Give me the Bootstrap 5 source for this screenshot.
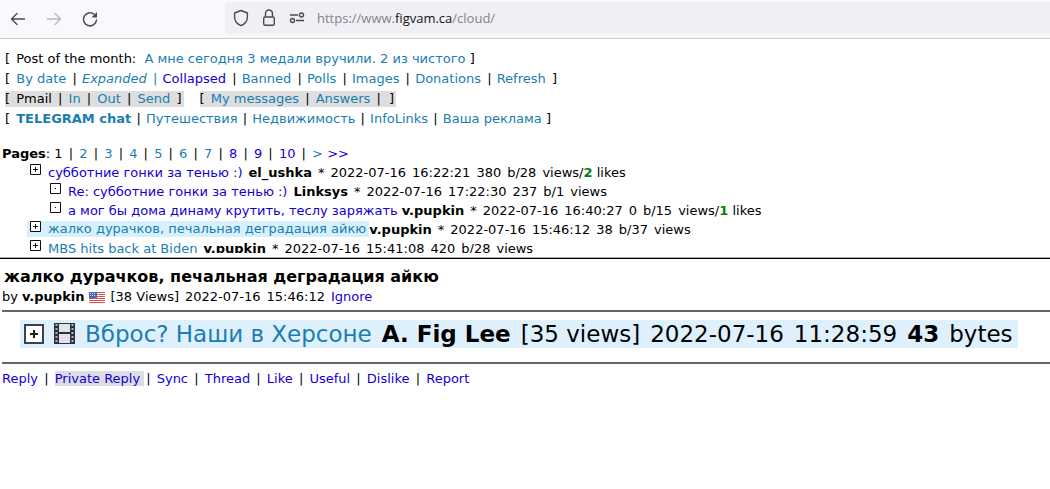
<!DOCTYPE html>
<html lang="ru">
<head>
<meta charset="utf-8">
<meta name="viewport" content="width=device-width, initial-scale=1">
<title>figvam.ca</title>
<link rel="stylesheet" href="https://cdn.jsdelivr.net/npm/bootstrap@5.3.0/dist/css/bootstrap.min.css">
<script src="https://cdn.jsdelivr.net/npm/bootstrap@5.3.0/dist/js/bootstrap.bundle.min.js" defer></script>
<style>
body{font:13px/20px "DejaVu Sans",Verdana,sans-serif;color:#000;background:#fff}
a{color:#1a7db3;text-decoration:none}
a.fresh{color:#1400d2}
b{font-weight:700}
.chrome{height:39px;background:#f9f9fd;border-bottom:1px solid #ccccd2;padding-left:10px}
.chrome button{border:0;background:none;padding:0;color:#4b4a55}
.chrome svg,.tree svg,.banner svg{display:block;flex:none}
.nav-set{gap:20px;width:215px;height:38px}
.address{height:32px;margin-top:2px;background:#f0eff4;border-radius:4px 0 0 4px;padding-left:8px;color:#4b4a55}
.url{font:13px/20px "Open Sans",sans-serif;color:#85848c}
.url span{color:#15141a}
.menus{padding:10px 5px 0}
.menus>div{height:20px}
.sep{margin:0 1px 0 2px}
.wide .sep{margin:0 2px}
.tight .sep{margin:0 1px}
.open{margin-right:2px}
.shade{background:#dedede;line-height:16px}
.threads{height:109px;margin-top:15px;overflow:hidden;line-height:19px;white-space:nowrap}
.pages{padding-left:2px}
.post{display:flex;height:19px;padding-left:27px}
.post.reply{padding-left:47px}
.tree{padding:1px 7px 0 3px}
.post p{display:flex;gap:6px;margin:0;padding-left:6px}
.hit{display:flex}
.picked .hit{background:#d6f0fc;height:16px;line-height:16px;margin-top:1px;padding-right:3px}
.picked .tree{padding-top:0}
.post.picked p{padding-left:0}
.likes{color:#0a7d0a}
.split{height:2px;background:#000;border-top:1px solid #aaa;margin-top:4px}
h1{font-size:16px;line-height:20px;font-weight:700;margin:8px 0 0;padding-left:4px}
.meta{display:flex;align-items:center;gap:6px;padding-left:2px}
.author{display:flex;align-items:center;gap:4px}
.rule{border-top:2px solid #666;margin-left:2px}
.body-text{margin-top:3px}
.banner{font-size:23px;line-height:28px;background:#dff0fd;margin:8px 32px 14px 20px;padding:0 0 0 4px;gap:10px;white-space:nowrap}
.actions{padding-left:2px;margin-top:5px}
.private{background:#dcdce2;padding-right:4px}
</style>
</head>
<body>
<header class="chrome d-flex">
  <div class="nav-set d-flex align-items-center">
    <button type="button" aria-label="Back"><svg width="16" height="16" viewBox="0 0 16 16" fill="none" stroke="currentColor" stroke-width="1.4" stroke-linecap="round" stroke-linejoin="round"><path d="M14.500 8H1.700M7 2.500 1.500 8 7 13.500"/></svg></button>
    <button type="button" aria-label="Forward"><svg width="16" height="16" viewBox="0 0 16 16" fill="none" stroke="#b9b8c0" stroke-width="1.4" stroke-linecap="round" stroke-linejoin="round"><path d="M1.500 8h12.800M9 2.500 14.500 8 9 13.500"/></svg></button>
    <button type="button" aria-label="Reload"><svg width="16" height="16" viewBox="0 0 16 16" fill="none" stroke="currentColor" stroke-width="1.5" stroke-linecap="round"><path d="M14.500 9A6.500 6.500 0 1 1 12 3.200"/><path d="M15 1v5.500H9.500z" fill="currentColor" stroke="none"/></svg></button>
  </div>
  <div class="address flex-grow-1 d-flex align-items-center">
    <svg width="16" height="18" viewBox="0 0 16 18" fill="none" stroke="currentColor" stroke-width="1.4" stroke-linejoin="round"><path d="M8 1.500 14.400 4v4c0 4-2.500 7-6.400 8.700C4.100 15 1.600 12 1.600 8V4z"/></svg>
    <svg class="ms-2" width="24" height="18" viewBox="0 0 24 18" fill="none" stroke="currentColor" stroke-width="1.4"><rect x="6.700" y="8" width="10.600" height="8.300" rx="1.500"/><path d="M8.500 8V4.500a3.500 3.500 0 0 1 7 0V8"/></svg>
    <svg class="ms-2" width="16" height="18" viewBox="0 0 16 18" fill="none" stroke="currentColor" stroke-width="1.4"><path d="M1 6h8M7 11.500h8"/><circle cx="12.500" cy="6" r="2"/><circle cx="3.500" cy="11.500" r="2"/></svg>
    <div class="url ms-2 ps-1">https://www.<span>figvam.ca</span>/cloud/</div>
  </div>
</header>

<svg class="d-none" aria-hidden="true">
  <symbol id="closed" viewBox="0 0 11 11"><path d="M.5.5h10v10H.5zM3 5.500h5M5.500 3v5" fill="#fff" stroke="#111"/></symbol>
  <symbol id="leaf" viewBox="0 0 11 11"><path d="M.5.5h10v10H.5z" fill="#fff" stroke="#111"/><path d="M5 5h1v1H5z"/></symbol>
</svg>

<main>
  <nav class="menus text-nowrap">
    <div><span class="open">[</span> Post of the month: <a href="#" class="ms-1">А мне сегодня 3 медали вручили. 2 из чистого</a> ]</div>
    <div><span class="open">[</span> <a href="#">By date</a> <span class="sep">|</span> <a href="#"><i>Expanded</i> <span class="sep">|</span></a> <a href="#" class="fresh">Collapsed</a> <span class="sep">|</span> <a href="#">Banned</a> <span class="sep">|</span> <a href="#">Polls</a> <span class="sep">|</span> <a href="#">Images</a> <span class="sep">|</span> <a href="#">Donations</a> <span class="sep">|</span> <a href="#">Refresh</a> <span class="sep">]</span></div>
    <div class="wide d-flex align-items-center gap-3"><div class="shade"><span class="open">[</span> Pmail <span class="sep">|</span> <a href="#">In</a> <span class="sep">|</span> <a href="#">Out</a> <span class="sep">|</span> <a href="#">Send</a> <span class="sep">]</span></div><div class="shade"><span class="open">[</span> <a href="#">My messages</a> <span class="sep">|</span> <a href="#">Answers</a> <span class="sep">|</span> <span class="sep">]</span></div></div>
    <div class="tight"><span class="open">[</span> <a href="#"><b>TELEGRAM chat</b></a> <span class="sep">|</span> <a href="#">Путешествия</a> <span class="sep">|</span> <a href="#">Недвижимость</a> <span class="sep">|</span> <a href="#">InfoLinks</a> <span class="sep">|</span> <a href="#">Ваша реклама</a> ]</div>
  </nav>

  <section class="threads">
    <nav class="pages wide"><b>Pages</b>: 1 <span class="sep">|</span> <a href="#">2</a> <span class="sep">|</span> <a href="#">3</a> <span class="sep">|</span> <a href="#">4</a> <span class="sep">|</span> <a href="#">5</a> <span class="sep">|</span> <a href="#">6</a> <span class="sep">|</span> <a href="#">7</a> <span class="sep">|</span> <a href="#" class="fresh">8</a> <span class="sep">|</span> <a href="#" class="fresh">9</a> <span class="sep">|</span> <a href="#" class="fresh">10</a> <span class="sep">|</span> <a href="#">&gt;</a> <a href="#" class="fresh">&gt;&gt;</a></nav>
    <div class="post">
      <div class="hit"><span class="tree"><svg width="11" height="11"><use href="#closed"/></svg></span><a href="#" class="fresh">субботние гонки за тенью :)</a></div>
      <p><b>el_ushka</b><span>*</span><span>2022-07-16</span><span>16:22:21</span><span>380</span><span>b/28</span><span>views/<b class="likes">2</b> likes</span></p>
    </div>
    <div class="post reply">
      <div class="hit"><span class="tree"><svg width="11" height="11"><use href="#leaf"/></svg></span><a href="#" class="fresh">Re: субботние гонки за тенью :)</a></div>
      <p><b>Linksys</b><span>*</span><span>2022-07-16</span><span>17:22:30</span><span>237</span><span>b/1</span><span>views</span></p>
    </div>
    <div class="post reply">
      <div class="hit"><span class="tree"><svg width="11" height="11"><use href="#leaf"/></svg></span><a href="#" class="fresh">а мог бы дома динаму крутить, теслу заряжать</a></div>
      <p class="ps-1"><b>v.pupkin</b><span>*</span><span>2022-07-16</span><span>16:40:27</span><span>0</span><span>b/15</span><span>views/<b class="likes">1</b> likes</span></p>
    </div>
    <div class="post picked">
      <div class="hit"><span class="tree"><svg width="11" height="11"><use href="#closed"/></svg></span><a href="#">жалко дурачков, печальная деградация айкю</a></div>
      <p><b>v.pupkin</b><span>*</span><span>2022-07-16</span><span>15:46:12</span><span>38</span><span>b/37</span><span>views</span></p>
    </div>
    <div class="post">
      <div class="hit"><span class="tree"><svg width="11" height="11"><use href="#closed"/></svg></span><a href="#">MBS hits back at Biden</a></div>
      <p><b>v.pupkin</b><span>*</span><span>2022-07-16</span><span>15:41:08</span><span>420</span><span>b/28</span><span>views</span></p>
    </div>
  </section>

  <div class="split"></div>

  <article>
    <h1>жалко дурачков, печальная деградация айкю</h1>
    <div class="meta">
      <span class="author">by <b>v.pupkin</b>
      <svg width="16" height="11" viewBox="0 0 16 11" role="img" aria-label="USA"><rect width="16" height="11" fill="#fff"/><path d="M0 .5h16M0 2.500h16M0 4.500h16M0 6.500h16M0 8.500h16M0 10.500h16" stroke="#d9534a"/><rect width="8" height="6" fill="#4668b4"/><path d="M1 1.500h6M1 3.500h6" stroke="#cfdcf5" stroke-dasharray="1 1"/></svg></span>
      <span>[38 Views]</span><span>2022-07-16</span><span>15:46:12</span><a href="#" class="fresh">Ignore</a>
    </div>
    <div class="rule body-text"></div>
    <div class="banner d-flex align-items-center">
      <svg width="20" height="20" viewBox="0 0 20 20"><rect x="1" y="1" width="18" height="18" fill="#fff" stroke="#3c4248" stroke-width="2"/><path d="M6 10h8M10 6v8" stroke="#222" stroke-width="2"/></svg>
      <svg width="21" height="22" viewBox="0 0 21 22"><path d="M0 0h21v21H0z" fill="#30303a"/><path d="M5 1h11v8H5zM5 11h11v9H5z" fill="#dfe3ec"/><path d="M2.500 1v19M18.500 1v19" stroke="#aeb6c2" stroke-width="2" stroke-dasharray="2 2"/></svg>
      <a href="#">Вброс? Наши в Херсоне</a>
      <b>A. Fig Lee</b><span>[35 views]</span><span>2022-07-16</span><span>11:28:59</span><b>43</b><span>bytes</span>
    </div>
    <div class="rule"></div>
    <nav class="actions wide"><a href="#" class="fresh">Reply</a> <span class="sep">|</span> <a href="#" class="fresh private">Private Reply</a><span class="sep">|</span> <a href="#" class="fresh">Sync</a> <span class="sep">|</span> <a href="#" class="fresh">Thread</a> <span class="sep">|</span> <a href="#" class="fresh">Like</a> <span class="sep">|</span> <a href="#" class="fresh">Useful</a> <span class="sep">|</span> <a href="#" class="fresh">Dislike</a> <span class="sep">|</span> <a href="#" class="fresh">Report</a></nav>
  </article>
</main>
</body>
</html>
